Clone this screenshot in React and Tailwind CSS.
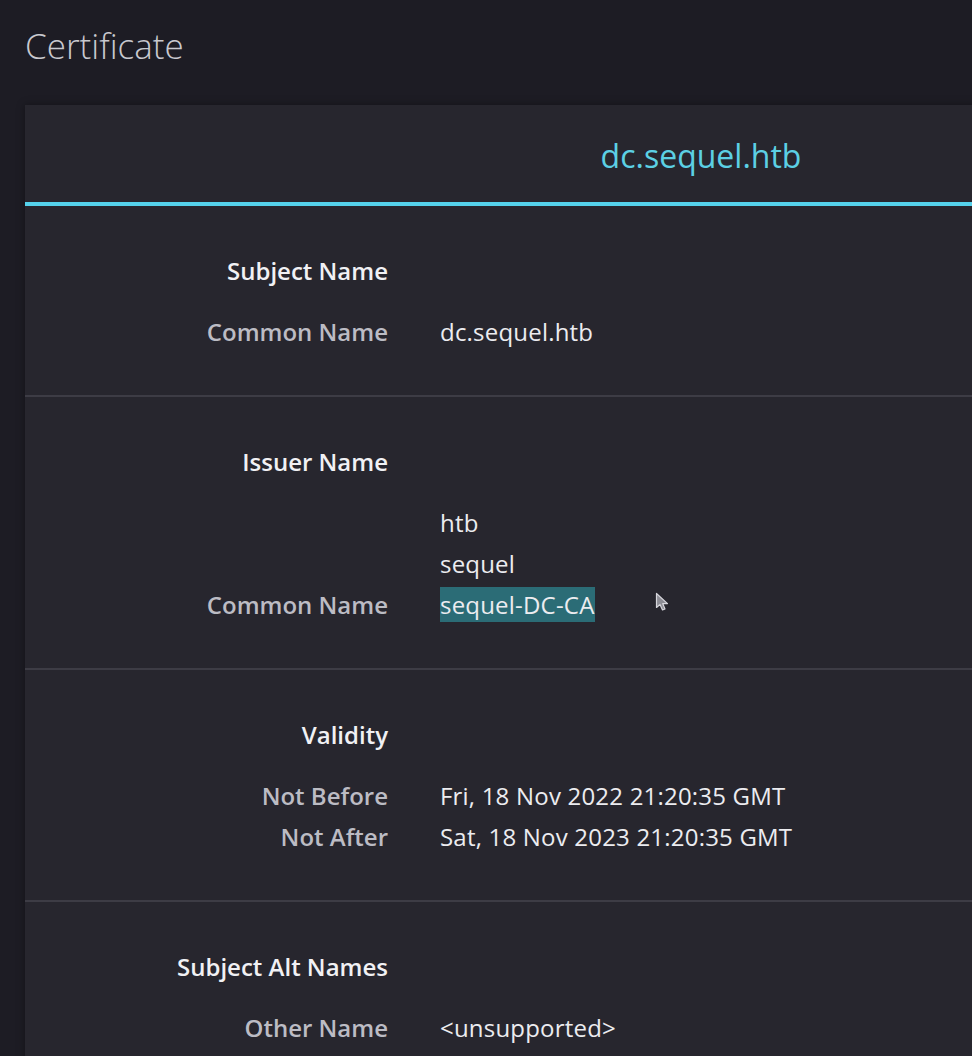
const font = { fontFamily: '"Open Sans", "Noto Sans", sans-serif' };

const sections = [
  {
    title: "Subject Name",
    rows: [["Common Name", "dc.sequel.htb"]],
  },
  {
    title: "Issuer Name",
    rows: [
      ["", "htb"],
      ["", "sequel"],
      ["Common Name", "sequel-DC-CA", true],
    ],
  },
  {
    title: "Validity",
    rows: [
      ["Not Before", "Fri, 18 Nov 2022 21:20:35 GMT"],
      ["Not After", "Sat, 18 Nov 2023 21:20:35 GMT"],
    ],
  },
  {
    title: "Subject Alt Names",
    rows: [
      ["Other Name", "<unsupported>"],
      ["DNS Name", "dc.sequel.htb"],
    ],
  },
];

const Cursor = () => (
  <svg
    className="absolute left-[215px] top-[8px]"
    width="14"
    height="20"
    viewBox="0 0 14 20"
  >
    <path
      d="M1.5 1.5 L1.5 15.5 L5 12.5 L7.5 18 L10 17 L7.7 11.6 L12.5 11.6 Z"
      fill="#8d8d95"
      stroke="#d6d6dc"
      strokeWidth="1.2"
      strokeLinejoin="round"
    />
  </svg>
);

const Section = ({ section, last }) => (
  <div
    className={`pt-[44px] pb-[43px] ${
      last ? "" : "border-b-2 border-[#3d3c45]"
    }`}
  >
    <div className="flex h-[41px] leading-[41px]">
      <div className="w-[363px] text-right font-semibold text-[#f1f1f4]">
        {section.title}
      </div>
    </div>
    <div className="mt-[20px]">
      {section.rows.map(([label, value, selected], i) => (
        <div key={i} className="flex h-[41px] leading-[41px]">
          <div className="w-[363px] shrink-0 text-right font-semibold text-[#bcbcc4]">
            {label}
          </div>
          <div className="relative ml-[52px] tracking-[0.2px] text-[#ececf0]">
            {selected ? (
              <>
                <span className="bg-[#2b6c76] py-[1px]">{value}</span>
                <Cursor />
              </>
            ) : (
              value
            )}
          </div>
        </div>
      ))}
    </div>
  </div>
);

const App = () => {
  return (
    <div
      className="h-screen w-full overflow-hidden bg-[#1d1c24] pl-[25px]"
      style={font}
    >
      <div className="h-[105px]">
        <h1 className="pt-[22px] text-[35px] font-light leading-[48px] text-[#c9c9cf]">
          Certificate
        </h1>
      </div>
      <div className="w-[1352px] bg-[#27262e] text-[24px] shadow-[0_0_8px_rgba(0,0,0,0.35)]">
        <div className="h-[97px] text-center text-[32px] leading-[101px] text-[#5cd0e4]">
          dc.sequel.htb
        </div>
        <div className="h-[4px] bg-[#55d2ec]" />
        {sections.map((s, i) => (
          <Section key={s.title} section={s} last={i === sections.length - 1} />
        ))}
      </div>
    </div>
  );
};

export default App;
